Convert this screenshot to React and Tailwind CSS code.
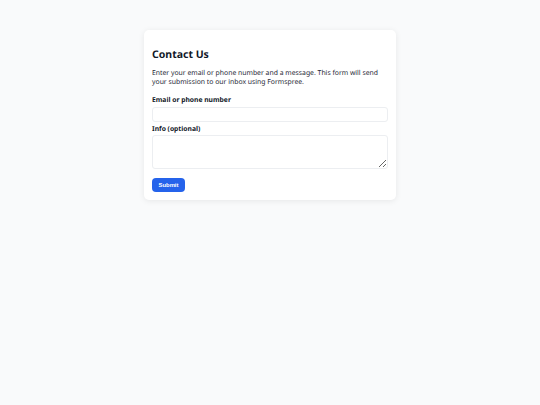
export default function App() {
  return (
    <div className="min-h-screen bg-[#f9fafb] pt-[30px] [text-rendering:geometricPrecision]" style={{ fontFamily: '"Noto Sans", sans-serif' }}>
      <div className="mx-auto w-[252px] rounded-[5px] bg-white px-[8px] pt-[18px] pb-[7px] shadow-[0_1px_6px_rgba(0,0,0,0.08)]">
        <h2 className="text-[10.5px] leading-[14px] font-bold text-[#111827]">Contact Us</h2>
        <p className="mt-[7px] text-[6.85px] leading-[9.3px] text-[#1f2937]">
          Enter your email or phone number and a message. This form will send your submission to our inbox using Formspree.
        </p>

        <form className="mt-[7px]">
          <label className="block text-[6.75px] leading-[9px] font-bold text-[#111827]">Email or phone number</label>
          <input
            type="text"
            className="mt-[3px] block h-[15px] w-full rounded-[3px] border border-[#eceef1] bg-white"
          />

          <label className="mt-[2px] block text-[6.75px] leading-[9px] font-bold text-[#111827]">Info (optional)</label>
          <textarea className="mt-[2px] block h-[34px] w-full rounded-[3px] border border-[#eceef1] bg-white" />

          <button
            type="button"
            className="mt-[8px] h-[14px] rounded-[4px] bg-[#2563eb] px-[6.5px] text-[5.9px] font-bold text-white"
            style={{ fontFamily: '"Liberation Sans", Arial, sans-serif' }}
          >
            Submit
          </button>
        </form>
      </div>
    </div>
  );
}
